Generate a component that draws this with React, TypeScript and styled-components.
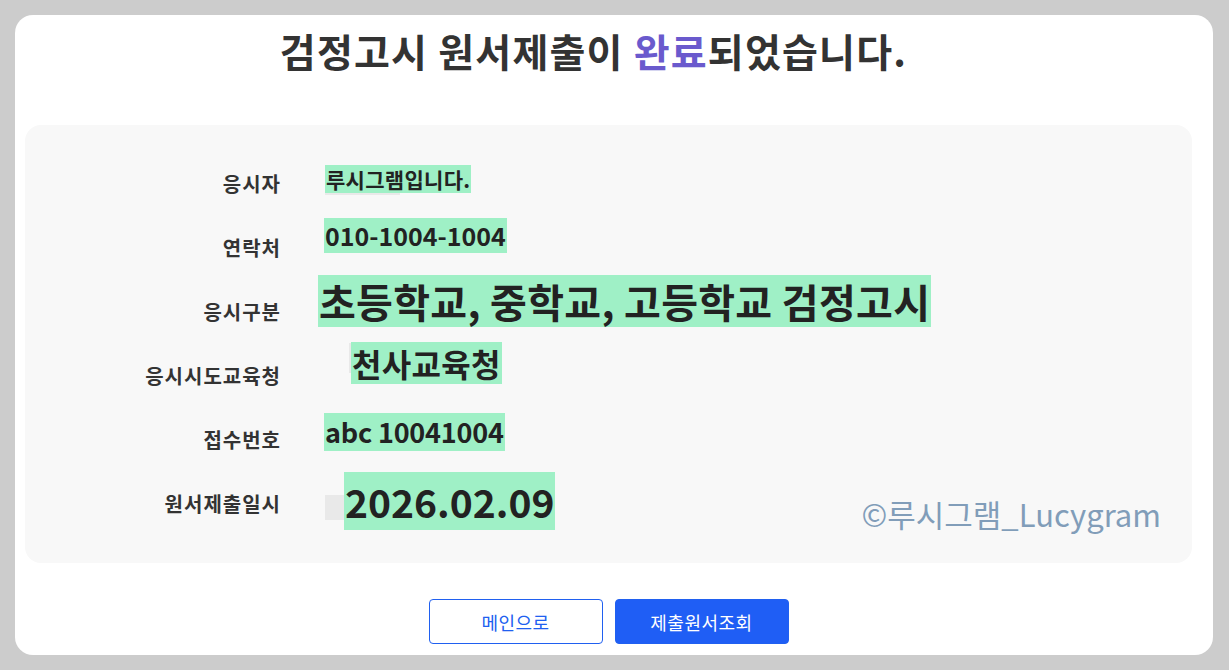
import { ReactElement } from 'react'
import styled, { createGlobalStyle } from 'styled-components'

const GlobalStyle = createGlobalStyle`
  html, body {
    margin: 0;
    padding: 0;
    background: #cccccc;
  }
  body {
    font-family: 'Noto Sans CJK KR', 'Noto Sans', sans-serif;
  }
`

const StyledCard = styled.div`
  box-sizing: border-box;
  width: 1198px;
  height: 640px;
  margin: 15px;
  padding: 15px 21px 11px 10px;
  background: #ffffff;
  border-radius: 18px;
  display: flex;
  flex-direction: column;
`

const StyledTitle = styled.h1`
  margin: 0;
  padding-right: 30px;
  height: 42px;
  line-height: 40px;
  text-align: center;
  font-size: 39px;
  font-weight: 700;
  color: #333333;
  letter-spacing: 1.2px;
`

const StyledAccent = styled.span`
  color: #6a5acd;
`

const StyledPanel = styled.div`
  position: relative;
  margin-top: 53px;
  padding: 27px 0;
  background: #f8f8f8;
  border-radius: 16px;
  display: flex;
  flex-direction: column;
`

const StyledRow = styled.div`
  height: 64px;
  display: flex;
  align-items: center;
`

const StyledLabel = styled.div`
  width: 256px;
  flex-shrink: 0;
  text-align: right;
  font-size: 20px;
  font-weight: 700;
  letter-spacing: 1px;
  color: #333333;
  line-height: 24px;
`

const StyledCell = styled.div<{ $x: number; $y: number }>`
  position: relative;
  align-self: flex-start;
  margin-left: ${(p) => p.$x}px;
  margin-top: ${(p) => p.$y}px;
`

const StyledShade = styled.span<{ $l: number; $t: number; $w: number; $h: number }>`
  position: absolute;
  left: ${(p) => p.$l}px;
  top: ${(p) => p.$t}px;
  width: ${(p) => p.$w}px;
  height: ${(p) => p.$h}px;
  background: #e9e9e9;
`

const StyledValue = styled.span<{ $size: number; $h: number; $ls: number }>`
  position: relative;
  display: inline-block;
  white-space: nowrap;
  background: #9ff0c6;
  color: #222222;
  font-weight: 700;
  font-size: ${(p) => p.$size}px;
  letter-spacing: ${(p) => p.$ls}px;
  height: ${(p) => p.$h}px;
  line-height: ${(p) => p.$h}px;
  padding: 0 1px;
`

const StyledWatermark = styled.div`
  position: absolute;
  right: 31px;
  bottom: 34px;
  font-size: 31px;
  line-height: 31px;
  font-weight: 400;
  color: #819db9;
  white-space: nowrap;
`

const StyledButtons = styled.div`
  margin-top: 36px;
  display: flex;
  justify-content: center;
  gap: 12px;
`

const StyledButton = styled.button<{ $primary?: boolean }>`
  box-sizing: border-box;
  width: 174px;
  height: 45px;
  border-radius: 4px;
  font-family: 'Noto Sans CJK KR', 'Noto Sans', sans-serif;
  font-size: 18px;
  letter-spacing: 0.5px;
  font-weight: 400;
  cursor: pointer;
  border: 1px solid #2060f0;
  background: ${(p) => (p.$primary ? '#1f5ef5' : '#ffffff')};
  color: ${(p) => (p.$primary ? '#ffffff' : '#2060f0')};
`

interface Shade {
  l: number
  t: number
  w: number
  h: number
}

interface InfoRow {
  label: string
  value: string
  size: number
  ls: number
  h: number
  x: number
  y: number
  shade?: Shade
}

const rows: InfoRow[] = [
  { label: '응시자', value: '루시그램입니다.', size: 21, ls: 0.3, h: 28, x: 44, y: 13, shade: { l: 0, t: 15, w: 75, h: 15 } },
  { label: '연락처', value: '010-1004-1004', size: 25, ls: 0, h: 35, x: 43, y: 2 },
  { label: '응시구분', value: '초등학교, 중학교, 고등학교 검정고시', size: 40, ls: 0.3, h: 52, x: 37, y: -5 },
  { label: '응시시도교육청', value: '천사교육청', size: 32, ls: 0.3, h: 42, x: 70, y: -2, shade: { l: -2, t: 1, w: 4, h: 30 } },
  { label: '접수번호', value: 'abc 10041004', size: 27, ls: -0.2, h: 38, x: 43, y: 5 },
  { label: '원서제출일시', value: '2026.02.09', size: 39, ls: 0, h: 58, x: 63, y: 0, shade: { l: -19, t: 23, w: 25, h: 25 } },
]

const App = (): ReactElement => {
  return (
    <>
      <GlobalStyle />
      <StyledCard>
        <StyledTitle>
          검정고시 원서제출이 <StyledAccent>완료</StyledAccent>되었습니다.
        </StyledTitle>

        <StyledPanel>
          {rows.map((row) => (
            <StyledRow key={row.label}>
              <StyledLabel>{row.label}</StyledLabel>
              <StyledCell $x={row.x} $y={row.y}>
                {row.shade && (
                  <StyledShade $l={row.shade.l} $t={row.shade.t} $w={row.shade.w} $h={row.shade.h} />
                )}
                <StyledValue $size={row.size} $h={row.h} $ls={row.ls}>
                  {row.value}
                </StyledValue>
              </StyledCell>
            </StyledRow>
          ))}
          <StyledWatermark>©루시그램_Lucygram</StyledWatermark>
        </StyledPanel>

        <StyledButtons>
          <StyledButton>메인으로</StyledButton>
          <StyledButton $primary>제출원서조회</StyledButton>
        </StyledButtons>
      </StyledCard>
    </>
  )
}

export default App
